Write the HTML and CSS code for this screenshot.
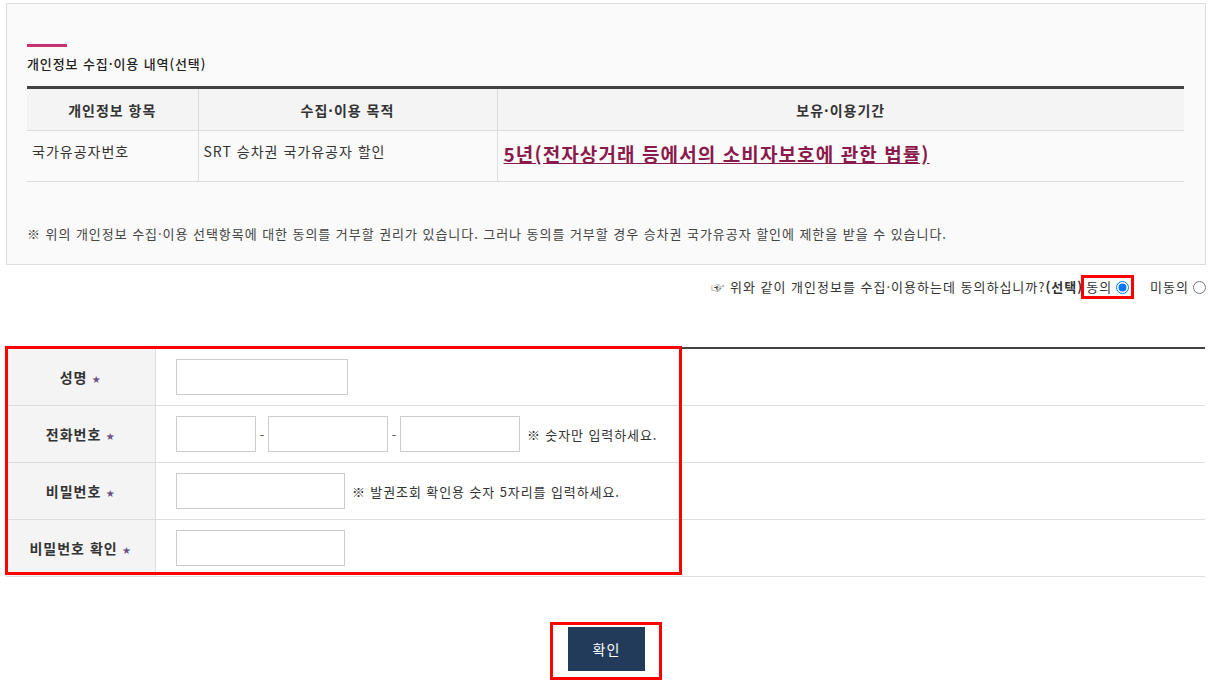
FILE: index.html
```html
<!DOCTYPE html>
<html lang="ko">
<head>
    <meta charset="UTF-8">
    <meta name="viewport" content="width=device-width, initial-scale=1.0">
    <title>개인정보 수집·이용 동의</title>
    <link rel="stylesheet" href="styles.css">
</head>
<body>
    <div class="page">
        <div class="agree-box">
            <span class="title-bar"></span>
            <h4 class="agree-title">개인정보 수집·이용 내역(선택)</h4>
            <table class="agree-table">
                <colgroup>
                    <col class="col-item">
                    <col class="col-purpose">
                    <col>
                </colgroup>
                <thead>
                    <tr>
                        <th>개인정보 항목</th>
                        <th>수집·이용 목적</th>
                        <th>보유·이용기간</th>
                    </tr>
                </thead>
                <tbody>
                    <tr>
                        <td>국가유공자번호</td>
                        <td>SRT 승차권 국가유공자 할인</td>
                        <td><a href="#" class="period-link">5년(전자상거래 등에서의 소비자보호에 관한 법률)</a></td>
                    </tr>
                </tbody>
            </table>
            <p class="agree-note">※ 위의 개인정보 수집·이용 선택항목에 대한 동의를 거부할 권리가 있습니다. 그러나 동의를 거부할 경우 승차권 국가유공자 할인에 제한을 받을 수 있습니다.</p>
        </div>

        <div class="consent">
            <span>☞ 위와 같이 개인정보를 수집·이용하는데 동의하십니까?<b>(선택)</b></span>
            <label class="choice mark"><span>동의</span><input type="radio" name="agree" checked></label>
            <label class="choice"><span>미동의</span><input type="radio" name="agree"></label>
        </div>

        <div class="form-wrap">
            <table class="user-form">
                <tbody>
                    <tr>
                        <th>성명 <i class="req">★</i></th>
                        <td><input type="text" class="in-name"></td>
                    </tr>
                    <tr>
                        <th>전화번호 <i class="req">★</i></th>
                        <td>
                            <input type="text" class="in-tel1"><span class="dash">-</span><input type="text" class="in-tel2"><span class="dash">-</span><input type="text" class="in-tel2">
                            <span class="hint">※ 숫자만 입력하세요.</span>
                        </td>
                    </tr>
                    <tr>
                        <th>비밀번호 <i class="req">★</i></th>
                        <td>
                            <input type="password" class="in-pw">
                            <span class="hint">※ 발권조회 확인용 숫자 5자리를 입력하세요.</span>
                        </td>
                    </tr>
                    <tr>
                        <th>비밀번호 확인 <i class="req">★</i></th>
                        <td><input type="password" class="in-pw"></td>
                    </tr>
                </tbody>
            </table>
            <div class="mark-box"></div>
        </div>

        <div class="btn-area">
            <span class="btn-mark"><button type="button" class="btn-ok">확인</button></span>
        </div>
    </div>
</body>
</html>
```

FILE: styles.css
```css
body {
    margin: 0;
    font-family: "Noto Sans CJK KR", "Noto Sans", sans-serif;
    font-size: 14px;
    letter-spacing: 1px;
    color: #333;
    background: #fff;
}

.page {
    width: 1200px;
    padding: 3px 14px 0 6px;
}

.agree-box {
    border: 1px solid #ddd;
    background-color: #fafafa;
    padding: 40px 21px 20px 20px;
}

.title-bar {
    display: block;
    width: 40px;
    height: 3px;
    background-color: #c8326f;
}

.agree-title {
    margin: 6px 0 12px;
    font-size: 13px;
    font-weight: 500;
    line-height: 21px;
    letter-spacing: 0.9px;
    color: #222;
}

.agree-table {
    width: 100%;
    border-collapse: collapse;
    border-top: 3px solid #444;
}

.col-item {
    width: 171px;
}

.col-purpose {
    width: 299px;
}

.agree-table th {
    height: 41px;
    padding: 0;
    background-color: #f4f4f4;
    border-bottom: 1px solid #ddd;
    border-left: 1px solid #ddd;
    font-weight: bold;
    line-height: 20px;
    color: #333;
}

.agree-table td {
    height: 40px;
    padding: 10px 5px 0 5px;
    vertical-align: top;
    border-bottom: 1px solid #ddd;
    border-left: 1px solid #ddd;
    line-height: 20px;
}

.agree-table th:first-child,
.agree-table td:first-child {
    border-left: none;
}

.agree-table td:last-child {
    padding-left: 6px;
}

.period-link {
    font-size: 19px;
    font-weight: bold;
    line-height: 26px;
    color: #8b1a4c;
    text-decoration: underline;
    letter-spacing: 1.1px;
}

.agree-note {
    margin: 42px 0 0;
    font-size: 13px;
    line-height: 20px;
    letter-spacing: 0.95px;
    color: #444;
}

.consent {
    display: flex;
    justify-content: flex-end;
    align-items: center;
    margin-top: 10px;
    font-size: 13px;
    line-height: 18px;
    color: #333;
}

.consent b {
    font-weight: bold;
}

.choice {
    display: flex;
    align-items: center;
    height: 18px;
}

.choice input {
    margin: 0 0 0 4px;
    width: 13px;
    height: 13px;
}

.choice.mark {
    border: 3px solid #f00;
    padding: 0 2px 0 2px;
    margin-left: -2px;
    margin-right: 16px;
}

.form-wrap {
    position: relative;
    margin-top: 48px;
}

.user-form {
    width: 1199px;
    border-collapse: collapse;
    border-top: 2px solid #444;
}

.user-form th {
    width: 149px;
    height: 56px;
    padding: 0;
    background-color: #f4f4f4;
    border-bottom: 1px solid #ddd;
    border-right: 1px solid #ddd;
    font-weight: bold;
    color: #333;
}

.user-form td {
    padding: 0 0 0 20px;
    border-bottom: 1px solid #ddd;
    white-space: nowrap;
}

.req {
    font-style: normal;
    font-size: 8px;
    color: #6b4d7e;
    vertical-align: 1px;
}

.user-form input {
    box-sizing: border-box;
    height: 36px;
    margin: 0;
    padding: 0 8px;
    border: 1px solid #ccc;
    background: #fff;
    vertical-align: middle;
}

.in-name {
    width: 172px;
}

.in-tel1 {
    width: 80px;
}

.in-tel2 {
    width: 120px;
}

.in-pw {
    width: 169px;
}

.dash {
    display: inline-block;
    width: 12px;
    text-align: center;
    vertical-align: middle;
    font-size: 13px;
    letter-spacing: 0;
    color: #555;
}

.hint {
    margin-left: 2px;
    font-size: 13px;
    letter-spacing: 0.9px;
    color: #333;
    vertical-align: middle;
}

.mark-box {
    position: absolute;
    left: -1px;
    top: -1px;
    width: 671px;
    height: 223px;
    border: 3px solid #f00;
    pointer-events: none;
}

.btn-area {
    display: flex;
    justify-content: center;
    margin-top: 45px;
}

.btn-mark {
    display: inline-block;
    padding: 2px 14px 6px 15px;
    border: 3px solid #f00;
}

.btn-ok {
    display: block;
    width: 77px;
    height: 44px;
    border: none;
    background-color: #223b5a;
    color: #fff;
    font-family: "Noto Sans CJK KR", "Noto Sans", sans-serif;
    font-size: 14px;
    letter-spacing: 1px;
}
```
